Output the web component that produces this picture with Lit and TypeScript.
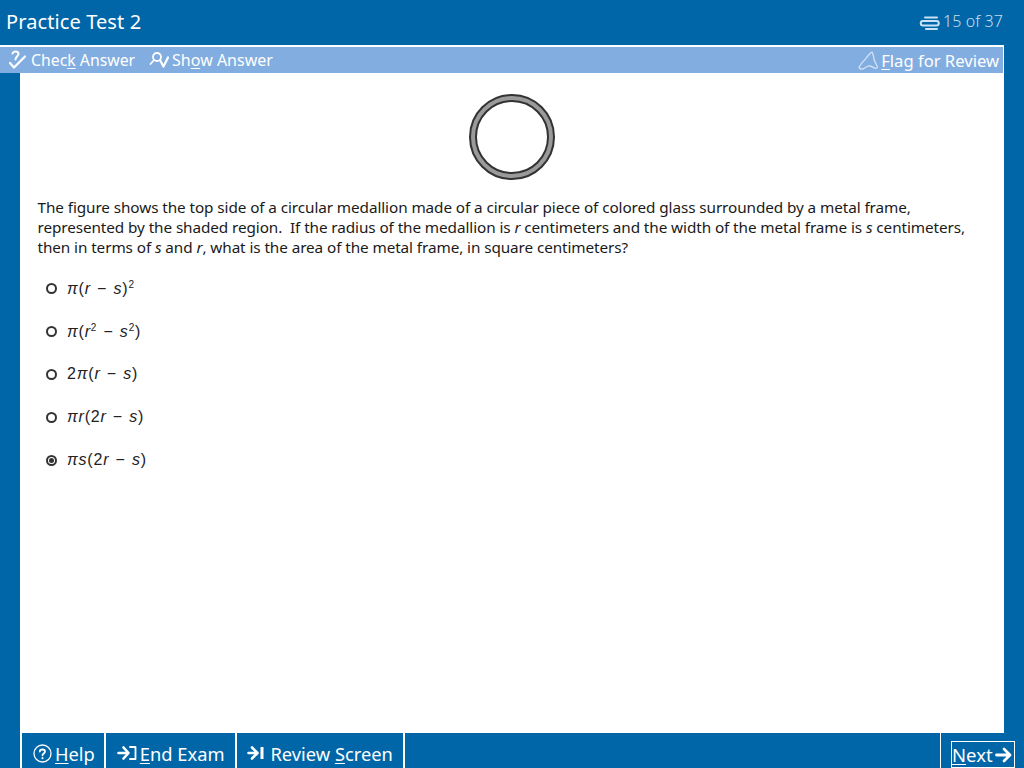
import { LitElement, html, css, svg } from "lit";
import { customElement } from "lit/decorators.js";

const options = [
  html`<i>π</i>(<i>r</i> − <i>s</i>)<sup>2</sup>`,
  html`<i>π</i>(<i>r</i><sup>2</sup> − <i>s</i><sup>2</sup>)`,
  html`2<i>π</i>(<i>r</i> − <i>s</i>)`,
  html`<i>πr</i>(2<i>r</i> − <i>s</i>)`,
  html`<i>πs</i>(2<i>r</i> − <i>s</i>)`,
];

const ic = (w: number, h: number, body: unknown) =>
  html`<svg class="ic" width=${w} height=${h} viewBox="0 0 ${w} ${h}" fill="none" stroke="currentColor" stroke-linecap="round" stroke-linejoin="round">${body}</svg>`;

const checkIcon = ic(19, 20, svg`<path stroke-width="2" d="M4.500 3.500 C5.500 0.800 10 0.800 10.500 3.500 C11 6 7.500 6.500 7.500 9.500"/><path stroke-width="2.200" d="M2 13 L6 17.500 L17 6.500"/>`);
const showIcon = ic(20, 20, svg`<circle cx="8" cy="7" r="4" stroke-width="1.800"/><path stroke-width="1.800" d="M5 10 L1.500 14"/><path stroke-width="2.200" d="M11.500 11 L14.500 16.500 L19 7.500"/>`);
const flagIcon = ic(21, 20, svg`<path stroke-width="1.300" stroke="#d5e3f5" d="M1 17.500 C3 13 7 10 9 7 C10.500 5 12 3 14 2 C16 5 15.500 9 17 12 C18 14 20 16 19 18 C17 19.500 15 16.500 12 16 C9 15.500 7 18.500 4.500 19 C3 19.200 1.500 19 1 17.500 Z"/>`);
const clipIcon = ic(21, 16, svg`<path stroke="#c9e2f5" stroke-width="2" d="M6 2.500 H18"/><path stroke="#c9e2f5" stroke-width="2" d="M4 6 H17.500 C20.500 6 20.500 10.500 17.500 10.500 H4 C1 10.500 1 6 4 6 Z"/><path stroke="#c9e2f5" stroke-width="2" d="M7 14 H18"/>`);
const helpIcon = ic(19, 19, svg`<circle cx="9.500" cy="9.500" r="8.500" stroke-width="1.300"/><path stroke-width="1.800" d="M6.800 7.500 C7 4.800 12 4.800 12 7.500 C12 9.500 9.500 9.300 9.500 11.300"/><path stroke-width="2" d="M9.500 14 V14.200"/>`);
const endIcon = ic(20, 16, svg`<path stroke-width="2.600" d="M1.500 8 H9.500 M6.500 2.500 L11.500 8 L6.500 13.500"/><path stroke-width="1.800" d="M13 2 H18.500 V14 H13"/>`);
const reviewIcon = ic(17, 16, svg`<path stroke-width="2.600" d="M1.500 8 H9 M5 2.500 L10.500 8 L5 13.500"/><path stroke-width="3" stroke-linecap="butt" d="M15 2 V14"/>`);
const nextIcon = ic(17, 18, svg`<path stroke-width="2.800" d="M1.500 9 H14.500 M9 3 L15 9 L9 15"/>`);

@customElement("app-root")
export class AppRoot extends LitElement {
  static styles = css`
    :host { display: block; width: 1024px; height: 768px; overflow: hidden; font-family: Tahoma, "Noto Sans", "DejaVu Sans", sans-serif; }
    .page { display: flex; flex-direction: column; height: 768px; background: #0066a8; color: #fff; }
    .ic { display: block; flex: none; }
    u { text-underline-offset: 2px; text-decoration-thickness: 1px; }

    .head { height: 45px; flex: none; display: flex; align-items: center; justify-content: space-between; padding: 0 21px 3px 6px; box-sizing: border-box; }
    .title { font-size: 20px; letter-spacing: 0.1px; }
    .count { display: flex; align-items: center; gap: 3px; font-size: 16px; letter-spacing: 0.1px; color: #c9dcef; font-weight: 300; }
    .count .ic { margin-top: 3px; }

    .tools { height: 26px; flex: none; width: 1003px; border-top: 2px solid #fff; border-right: 1px solid #fff; background: #82ade0; display: flex; align-items: center; font-size: 15.800px; color: #fff; }
    .tools-in { display: flex; flex: 1; align-items: center; padding: 0 4px 0 8px; }
    .tool { display: flex; align-items: center; gap: 4px; margin-right: 14px; }
    .tool:nth-child(2) { gap: 3px; font-size: 16px; }
    .spacer { flex: 1; }
    .tools-in .flag { margin-right: 0; gap: 2px; font-size: 16.600px; }

    .mid { flex: 1; display: flex; min-height: 0; }
    .content { margin-left: 20px; width: 984px; background: #fff; color: #1a1a1a; box-sizing: border-box; padding: 21px 18px 0 17.500px; }
    .figure { display: flex; justify-content: center; }
    .stem { margin: 17px 0 0; font-size: 15.300px; line-height: 20px; letter-spacing: -0.09px; }
    .opts { list-style: none; margin: 8px 0 0; padding: 0; display: flex; flex-direction: column; }
    .opt { display: flex; align-items: center; height: 43px; margin-left: 8.500px; gap: 10px; font-family: "Liberation Sans", sans-serif; font-size: 16px; letter-spacing: 0.8px; word-spacing: 1px; color: #222; }
    .radio { width: 11px; height: 11px; box-sizing: border-box; border: 2px solid #333; border-radius: 50%; background: #fff; display: flex; align-items: center; justify-content: center; margin-top: 3px; }
    .radio.on::after { content: ""; width: 5px; height: 5px; border-radius: 50%; background: #333; }
    .math { white-space: pre; margin-top: 2px; }
    .opt:nth-child(-n+2) .math { margin-top: 4px; }
    sup { font-size: 10px; line-height: 0; }

    .foot { height: 35px; flex: none; display: flex; margin-left: 20px; border-left: 2px solid #fff; font-size: 18.300px; }
    .btn { display: flex; align-items: center; gap: 3px; padding: 5px 9px 0 11px; border-right: 2px solid #fff; box-sizing: border-box; }
    .btn:nth-child(2) { padding: 5px 11px 0 11px; }
    .btn:nth-child(3) { gap: 6px; padding: 5px 10px 0 10px; }
    .foot .spacer { flex: 1; }
    .nextwrap { width: 84px; border-left: 1px solid #fff; box-sizing: border-box; padding: 8px 9px 0 10px; }
    .next { display: flex; align-items: center; justify-content: space-between; height: 27px; border: 1px solid #fff; box-sizing: border-box; padding: 0 2px 0 0; font-size: 18.500px; }
  `;

  render() {
    return html`<div class="page">
      <header class="head">
        <div class="title">Practice Test 2</div>
        <div class="count">${clipIcon}<span>15 of 37</span></div>
      </header>
      <nav class="tools"><div class="tools-in">
        <div class="tool">${checkIcon}<span>Chec<u>k</u> Answer</span></div>
        <div class="tool">${showIcon}<span>Sh<u>o</u>w Answer</span></div>
        <div class="spacer"></div>
        <div class="tool flag">${flagIcon}<span><u>F</u>lag for Review</span></div>
      </div></nav>
      <div class="mid">
        <main class="content">
          <div class="figure">
            <svg width="86" height="86" viewBox="0 0 86 86">
              <circle cx="43" cy="43" r="39" fill="#fff" stroke="#333" stroke-width="8"/>
              <circle cx="43" cy="43" r="39" fill="none" stroke="#9a9a9a" stroke-width="4"/>
            </svg>
          </div>
          <p class="stem">The figure shows the top side of a circular medallion made of a circular piece of colored glass surrounded by a metal frame, represented by the shaded region.&nbsp; If the radius of the medallion is <i>r</i> centimeters and the width of the metal frame is <i>s</i> centimeters, then in terms of <i>s</i> and <i>r</i>, what is the area of the metal frame, in square centimeters?</p>
          <ul class="opts">
            ${options.map((o, i) => html`<li class="opt"><span class="radio ${i === 4 ? "on" : ""}"></span><span class="math">${o}</span></li>`)}
          </ul>
        </main>
      </div>
      <footer class="foot">
        <div class="btn">${helpIcon}<span><u>H</u>elp</span></div>
        <div class="btn">${endIcon}<span><u>E</u>nd Exam</span></div>
        <div class="btn">${reviewIcon}<span>Review <u>S</u>creen</span></div>
        <div class="spacer"></div>
        <div class="nextwrap"><div class="next"><span><u>N</u>ext</span>${nextIcon}</div></div>
      </footer>
    </div>`;
  }
}
